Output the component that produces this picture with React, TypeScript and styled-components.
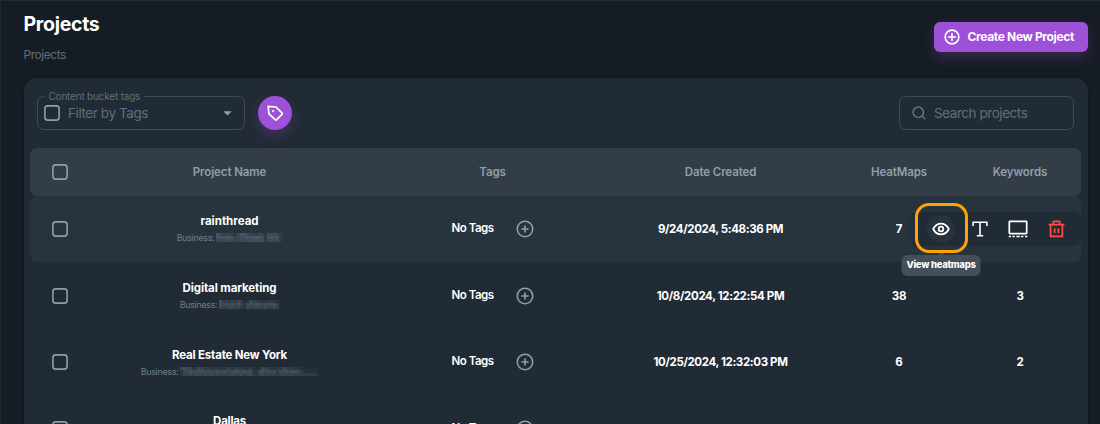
import React from "react";
import styled, { createGlobalStyle } from "styled-components";

const Global = createGlobalStyle`
  * { box-sizing: border-box; }
  body { margin: 0; background: #161c24; overflow: hidden; font-family: Inter, "Liberation Sans", sans-serif; }
  svg { display: block; flex: none; }
`;

const Page = styled.main`
  height: 424px;
  overflow: hidden;
  border-top: 1px solid #242c35;
  border-left: 1px solid #20272f;
  padding: 0 12.5px 0 22.5px;
  color: #fff;
`;

const PageHeader = styled.header`
  display: flex;
  justify-content: space-between;
  height: 77px;
`;

const Titles = styled.div`
  padding-top: 9px;
`;

const Title = styled.h1`
  margin: 0;
  font-size: 19.5px;
  line-height: 28px;
  font-weight: 700;
  letter-spacing: -0.3px;
`;

const Crumb = styled.div`
  margin-top: 8px;
  font-size: 12px;
  line-height: 18px;
  color: #5f6e7b;
  letter-spacing: -0.45px;
`;

const CreateButton = styled.button`
  display: flex;
  align-items: center;
  gap: 7.5px;
  width: 154px;
  height: 30px;
  margin-top: 21px;
  padding: 0 0 0 10.5px;
  border: 0;
  border-radius: 6px;
  background: #9c51d8;
  color: #fff;
  font: 700 12px/20px Inter, sans-serif;
  letter-spacing: -0.34px;
  white-space: nowrap;
  box-shadow: 0 6px 13px rgba(156, 81, 216, 0.24);
`;

const Panel = styled.section`
  height: 400px;
  padding: 18px 6.5px 0;
  border-radius: 13px;
  background: #212b35;
  box-shadow: 0 0 3px rgba(0, 0, 0, 0.35);
`;

const Toolbar = styled.div`
  display: flex;
  align-items: center;
  height: 34px;
  padding: 0 7px;
  margin-bottom: 18px;
`;

const Field = styled.div<{ $w: number; $pad: number; $gap: number; $ls?: number }>`
  position: relative;
  display: flex;
  align-items: center;
  gap: ${(p) => p.$gap}px;
  width: ${(p) => p.$w}px;
  height: 34px;
  padding: 0 12px 0 ${(p) => p.$pad}px;
  border: 1px solid #3f4b56;
  border-radius: 6.5px;
  color: #5f6f7c;
  font-size: 13.5px;
  line-height: 18px;
  letter-spacing: ${(p) => p.$ls ?? 0}px;
  white-space: nowrap;
`;

const FieldText = styled.span`
  flex: 1;
  padding-bottom: 1px;
`;

const FloatingLabel = styled.span`
  position: absolute;
  top: -8px;
  left: 6.5px;
  padding: 0 4px;
  background: #212b35;
  font-size: 10px;
  line-height: 14px;
  letter-spacing: -0.2px;
  white-space: nowrap;
`;

const TagButton = styled.button`
  display: grid;
  place-items: center;
  width: 34px;
  height: 34px;
  margin: 0 auto 0 13px;
  padding: 0;
  border: 0;
  border-radius: 50%;
  background: #9c51d8;
  box-shadow: 0 6px 13px rgba(156, 81, 216, 0.24);
`;

const Row = styled.div<{ $head?: boolean; $hover?: boolean }>`
  position: relative;
  display: grid;
  grid-template-columns: 60px 279px 247px 209px 148px 94px;
  align-items: center;
  height: ${(p) => (p.$head ? 47.5 : 66.7)}px;
  border-radius: 7px;
  background: ${(p) => (p.$head ? "#333d47" : p.$hover ? "#28343d" : "transparent")};
  z-index: ${(p) => (p.$hover ? 1 : 0)};
`;

const Cell = styled.div`
  display: flex;
  justify-content: center;
  align-items: center;
`;

const HeadText = styled.span`
  font-size: 11.5px;
  font-weight: 600;
  color: #919eab;
  letter-spacing: -0.1px;
`;

const NameCell = styled.div`
  display: flex;
  flex-direction: column;
  align-items: center;
`;

const Strong = styled.span<{ $ls?: number }>`
  font-size: 11.5px;
  line-height: 18px;
  font-weight: 700;
  letter-spacing: ${(p) => p.$ls ?? -0.2}px;
  white-space: nowrap;
`;

const Business = styled.div`
  display: flex;
  align-items: center;
  gap: 2px;
  height: 15px;
  font-size: 9px;
  color: #6f7d8a;
  letter-spacing: -0.35px;
`;

const NoTags = styled.span`
  margin: 0 22px 2px 0;
  font-size: 11.5px;
  font-weight: 600;
  letter-spacing: -0.5px;
`;

const Actions = styled.div`
  position: absolute;
  right: 0;
  top: 16px;
  display: grid;
  grid-template-columns: 52px 25px 51px 26px;
  justify-items: center;
  align-items: center;
  width: 173px;
  height: 34px;
  padding-left: 7px;
  border-radius: 7px;
  background: linear-gradient(90deg, #28343d 0, #212b35 8px);
`;

const ViewAction = styled.div`
  position: relative;
  display: grid;
  place-items: center;
  width: 28px;
  height: 28px;
  border-radius: 50%;
  background: #28343d;
`;

const Highlight = styled.div`
  position: absolute;
  inset: -12px -12.5px -10.5px -12px;
  border: 3px solid #ffa305;
  border-radius: 14px;
`;

const Tooltip = styled.div`
  position: absolute;
  top: 40px;
  left: 50%;
  width: 79px;
  height: 21px;
  transform: translateX(-50%);
  border-radius: 6px;
  background: #454f59;
  font-size: 9.5px;
  line-height: 20px;
  font-weight: 800;
  letter-spacing: -0.28px;
  text-align: center;
  white-space: nowrap;
  &::before {
    content: "";
    position: absolute;
    top: -3px;
    left: 50%;
    border: 4px solid transparent;
    border-top: 0;
    border-bottom: 3px solid #454f59;
    transform: translateX(-50%);
  }
`;

const CheckBox = () => (
  <svg width="16" height="16" viewBox="0 0 16 16" fill="none">
    <rect x="0.9" y="0.9" width="14.2" height="14.2" rx="2.8" stroke="#919eab" strokeWidth="1.6" />
  </svg>
);

const Plus = ({ s = 18, c = "#919eab", w = 1.6, a = 3 }) => (
  <svg width={s} height={s} viewBox="0 0 18 18" fill="none" stroke={c} strokeWidth={w} strokeLinecap="round">
    <circle cx="9" cy="9" r="7.7" />
    <path d={`M9 ${9 - a}V${9 + a}M${9 - a} 9H${9 + a}`} />
  </svg>
);

const TagIcon = () => (
  <svg width="18" height="18" viewBox="0 0 18 18" fill="none" stroke="#fff" strokeWidth="1.7" strokeLinejoin="round">
    <path d="M2.1 2.3L9.9 3L16.2 9.2Q16.6 9.7 16.2 10.1L10.4 15.8Q9.9 16.2 9.4 15.8L3 9.8Z" />
    <circle cx="7.1" cy="7.2" r="1.1" fill="#fff" stroke="none" />
  </svg>
);

const SearchIcon = () => (
  <svg width="14" height="14" viewBox="0 0 14 14" fill="none" stroke="#637381" strokeWidth="1.5" strokeLinecap="round">
    <circle cx="6.3" cy="6.3" r="5.2" />
    <path d="M10.3 10.3L12.8 12.8" />
  </svg>
);

const Caret = () => (
  <svg width="9" height="5" viewBox="0 0 9 5" fill="#919eab">
    <path d="M0.3 0.2H8.7L4.5 4.6Z" />
  </svg>
);

const EyeIcon = () => (
  <svg width="18" height="14" viewBox="0 0 18 14" fill="none" stroke="#fff" strokeWidth="1.8">
    <path d="M1.2 7C3 3.4 5.8 1.6 9 1.6S15 3.4 16.8 7C15 10.6 12.2 12.4 9 12.4S3 10.6 1.2 7Z" strokeLinejoin="round" />
    <circle cx="9" cy="7" r="2.3" />
  </svg>
);

const TextIcon = () => (
  <svg width="16" height="16" viewBox="0 0 16 16" fill="none" stroke="#fff" strokeWidth="1.6">
    <path d="M1.1 5V1.3H14.9V5M8 1.3V14.6M4.8 14.8H11.2" />
  </svg>
);

const ScreenIcon = () => (
  <svg width="20" height="18" viewBox="0 0 20 18" fill="none" stroke="#fff" strokeWidth="1.7">
    <rect x="1.3" y="1.3" width="17.4" height="12.4" rx="0.6" />
    <path d="M0.7 16.6H3M4.4 16.6H6.8M8.4 16.6H11.8M13.2 16.6H15.4M17 16.6H19.3" strokeWidth="1.5" />
  </svg>
);

const TrashIcon = () => (
  <svg width="17" height="18" viewBox="0 0 17 18" fill="none" stroke="#ff4d45" strokeWidth="1.7" strokeLinejoin="round">
    <path d="M0.6 4.7H16.4M5.3 4.5V1.4H11.7V4.5M2.6 4.9V16.4H14.4V4.9M6.6 8.3V13M10.4 8.3V13" />
  </svg>
);

/* Mosaic bar hiding a private business name; each digit is the strength of one tile. */
const Redacted = ({ tiles, width }: { tiles: string[]; width: number }) => (
  <svg width={width} height="9" viewBox={`0 0 ${width} 9`}>
    {tiles.map((line, y) =>
      line.split("").map((v, x) => (
        <rect key={`${x}-${y}`} x={x * 3} y={y * 3} width="3" height="3" fill="#8793a0" opacity={0.04 + Number(v) * 0.06} />
      )),
    )}
  </svg>
);

const rows = [
  {
    name: "rainthread", ls: 0, date: "9/24/2024, 5:48:36 PM", dls: -0.37, heat: "7", keys: "", width: 66,
    tiles: ["5322210355322132043421", "5545542344555654145451", "3334332233434434133331"],
  },
  {
    name: "Digital marketing", ls: -0.1, date: "10/8/2024, 12:22:54 PM", dls: -0.34, heat: "38", keys: "3", width: 60,
    tiles: ["52323243014322112211", "54545453145455454553", "43344342143343343343"],
  },
  {
    name: "Real Estate New York", ls: -0.18, date: "10/25/2024, 12:32:03 PM", dls: -0.37, heat: "6", keys: "2", width: 138,
    tiles: [
      "4544124322112112313221121004321121432211000000",
      "1445445544445454345545451145454424454554210000",
      "1334344343434333343343442134333323333332222221",
    ],
  },
  { name: "Dallas", ls: -0.25, date: "", dls: 0, heat: "", keys: "", width: 0, tiles: [] },
];

export default function App() {
  return (
    <Page>
      <Global />
      <PageHeader>
        <Titles>
          <Title>Projects</Title>
          <Crumb>Projects</Crumb>
        </Titles>
        <CreateButton>
          <Plus s={16} c="#fff" a={4} w={1.8} />
          Create New Project
        </CreateButton>
      </PageHeader>
      <Panel>
        <Toolbar>
          <Field $w={208} $pad={5.5} $gap={8.5} $ls={-0.42}>
            <FloatingLabel>Content bucket tags</FloatingLabel>
            <CheckBox />
            <FieldText>Filter by Tags</FieldText>
            <Caret />
          </Field>
          <TagButton>
            <TagIcon />
          </TagButton>
          <Field $w={175} $pad={12} $gap={8} $ls={-0.45}>
            <SearchIcon />
            <FieldText>Search projects</FieldText>
          </Field>
        </Toolbar>
        <Row $head>
          <Cell><CheckBox /></Cell>
          {["Project Name", "Tags", "Date Created", "HeatMaps", "Keywords"].map((h) => (
            <Cell key={h}><HeadText>{h}</HeadText></Cell>
          ))}
        </Row>
        {rows.map((r, i) => (
          <Row key={r.name} $hover={i === 0}>
            <Cell><CheckBox /></Cell>
            <NameCell>
              <Strong $ls={r.ls}>{r.name}</Strong>
              <Business>
                Business:
                <Redacted tiles={r.tiles} width={r.width} />
              </Business>
            </NameCell>
            <Cell><NoTags>No Tags</NoTags><Plus /></Cell>
            <Cell><Strong $ls={r.dls}>{r.date}</Strong></Cell>
            <Cell><Strong>{r.heat}</Strong></Cell>
            <Cell><Strong>{r.keys}</Strong></Cell>
            {i === 0 && (
              <Actions>
                <ViewAction>
                  <EyeIcon />
                  <Tooltip>View heatmaps</Tooltip>
                  <Highlight />
                </ViewAction>
                <TextIcon />
                <ScreenIcon />
                <TrashIcon />
              </Actions>
            )}
          </Row>
        ))}
      </Panel>
    </Page>
  );
}
